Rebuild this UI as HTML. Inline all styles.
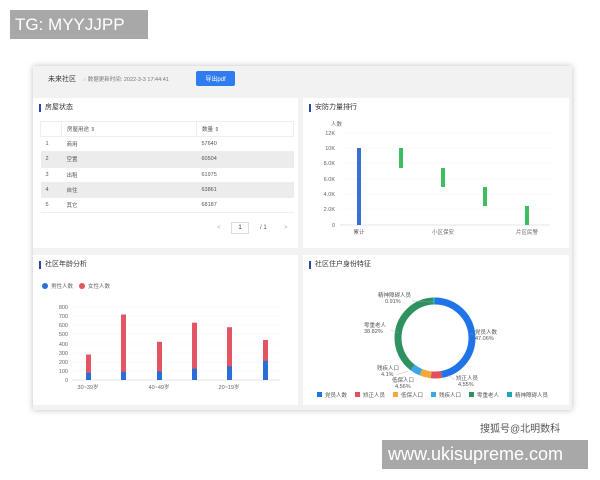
<!DOCTYPE html>
<html><head><meta charset="utf-8"><style>
*{margin:0;padding:0;box-sizing:border-box}
body{width:600px;height:480px;background:#fff;position:relative;overflow:hidden;font-family:"Liberation Sans","Noto Sans CJK SC",sans-serif;color:#333}
.abs{position:absolute}
.tg{left:10px;top:10px;width:138px;height:29px;background:#a8a8a8;color:#fff;font-size:17px;line-height:29px;padding-left:5px}
.wm{left:382px;top:440px;width:206px;height:29px;background:#a8a8a8;color:#fff;font-size:18px;line-height:29px;padding-left:6px}
.dash{left:33px;top:66px;width:539px;height:344px;background:#f2f2f2;box-shadow:0 0 6px rgba(0,0,0,.25)}
.panel{background:#fff;position:absolute}
.ttl{position:absolute;left:6px;top:6px;font-size:7px;color:#333;border-left:2px solid #2a47a6;padding-left:4px;line-height:8px}
.t7{font-size:6px;color:#555}
table{border-collapse:collapse;position:absolute;left:7px;top:23px;width:254px;font-size:5.5px;color:#555}
td{height:15.2px;border-bottom:1px solid #eee;padding-left:5px}
tr.g td{background:#ececec}
.btn{left:163px;top:5px;width:39px;height:15px;background:#2f7cf0;border-radius:2px;color:#fff;font-size:6px;display:flex;align-items:center;justify-content:center}
</style></head><body>
<div class="abs tg">TG: MYYJJPP</div>
<div class="abs dash">
 <div class="abs" style="left:15px;top:8px;font-size:7px;color:#333">未来社区</div>
 <div class="abs t7" style="left:50px;top:9px;font-size:5.5px;color:#777">◌ 数据更新时间: 2022-3-3 17:44:41</div>
 <div class="abs btn">导出pdf</div>

 <div class="panel" style="left:0;top:32px;width:265px;height:150px">
  <div class="ttl">房屋状态</div>
  <table>
   <tr><td style="width:21px;border:1px solid #eee"></td><td style="width:135px;border:1px solid #eee">房屋用途 ⇕</td><td style="border:1px solid #eee">数量 ⇕</td></tr>
   <tr><td>1</td><td>商用</td><td>57640</td></tr>
   <tr class="g"><td>2</td><td>空置</td><td>60504</td></tr>
   <tr><td>3</td><td>出租</td><td>61975</td></tr>
   <tr class="g"><td>4</td><td>自住</td><td>63861</td></tr>
   <tr><td>5</td><td>其它</td><td>68187</td></tr>
  </table>
  <div class="abs t7" style="left:184px;top:127px;color:#aaa">&lt;</div>
  <div class="abs" style="left:198px;top:124px;width:18px;height:12px;border:1px solid #ddd;font-size:6px;text-align:center;line-height:10px">1</div>
  <div class="abs t7" style="left:227px;top:127px">/ 1</div>
  <div class="abs t7" style="left:251px;top:127px;color:#aaa">&gt;</div>
 </div>

 <div class="panel" style="left:270px;top:32px;width:266px;height:150px">
  <div class="ttl">安防力量排行</div>
 </div>
 <div class="panel" style="left:0;top:189px;width:265px;height:150px">
  <div class="ttl">社区年龄分析</div>
 </div>
 <div class="panel" style="left:270px;top:189px;width:266px;height:150px">
  <div class="ttl">社区住户身份特征</div>
 </div>
</div>

<svg class="abs" style="left:0;top:0" width="600" height="480" font-family="Liberation Sans,Noto Sans CJK SC,sans-serif" font-size="5.5" fill="#666">
 <text x="331" y="126">人数</text>
 <g stroke="#eee" stroke-dasharray="2,2" stroke-width="0.6">
  <line x1="340" y1="133" x2="550" y2="133"/><line x1="340" y1="148" x2="550" y2="148"/><line x1="340" y1="163" x2="550" y2="163"/><line x1="340" y1="179" x2="550" y2="179"/><line x1="340" y1="194" x2="550" y2="194"/><line x1="340" y1="209" x2="550" y2="209"/>
 </g>
 <line x1="340" y1="225" x2="550" y2="225" stroke="#ccc" stroke-width="0.6"/>
 <g text-anchor="end"><text x="335" y="135">12K</text><text x="335" y="150">10K</text><text x="335" y="165">8.0K</text><text x="335" y="181">6.0K</text><text x="335" y="196">4.0K</text><text x="335" y="211">2.0K</text><text x="335" y="227">0</text></g>
 <rect x="357" y="148" width="4" height="77" fill="#3a6fd0"/>
 <g fill="#3cbf62"><rect x="399" y="148" width="4" height="20"/><rect x="441" y="168" width="4" height="19"/><rect x="483" y="187" width="4" height="19"/><rect x="525" y="206" width="4" height="19"/></g>
 <g text-anchor="middle"><text x="359" y="234">累计</text><text x="443" y="234">小区保安</text><text x="527" y="234">片区民警</text></g>

 <circle cx="45" cy="286" r="3" fill="#2a6fd6"/><text x="51" y="288">男性人数</text>
 <circle cx="82" cy="286" r="3" fill="#e25563"/><text x="88" y="288">女性人数</text>
 <g stroke="#eee" stroke-dasharray="2,2" stroke-width="0.6">
  <line x1="72" y1="307" x2="280" y2="307"/><line x1="72" y1="316" x2="280" y2="316"/><line x1="72" y1="325" x2="280" y2="325"/><line x1="72" y1="334" x2="280" y2="334"/><line x1="72" y1="344" x2="280" y2="344"/><line x1="72" y1="353" x2="280" y2="353"/><line x1="72" y1="362" x2="280" y2="362"/><line x1="72" y1="371" x2="280" y2="371"/>
 </g>
 <line x1="72" y1="380" x2="280" y2="380" stroke="#ccc" stroke-width="0.6"/>
 <g text-anchor="end"><text x="68" y="309">800</text><text x="68" y="318">700</text><text x="68" y="327">600</text><text x="68" y="336">500</text><text x="68" y="346">400</text><text x="68" y="355">300</text><text x="68" y="364">200</text><text x="68" y="373">100</text><text x="68" y="382">0</text></g>
 <g fill="#e25563"><rect x="86" y="354.5" width="5" height="25.5"/><rect x="121" y="314.5" width="5" height="65.5"/><rect x="157" y="341.8" width="5" height="38.2"/><rect x="192" y="322.7" width="5" height="57.3"/><rect x="227" y="327.2" width="5" height="52.8"/><rect x="263" y="340" width="5" height="40"/></g>
 <g fill="#2a6fd6"><rect x="86" y="372.7" width="5" height="7.3"/><rect x="121" y="371.8" width="5" height="8.2"/><rect x="157" y="371.4" width="5" height="8.6"/><rect x="192" y="368.6" width="5" height="11.4"/><rect x="227" y="366.3" width="5" height="13.7"/><rect x="263" y="360.9" width="5" height="19.1"/></g>
 <g text-anchor="middle"><text x="88" y="389">30~39岁</text><text x="159" y="389">40~49岁</text><text x="229" y="389">20~19岁</text></g>

 <g transform="rotate(-90 435 338)" fill="none" stroke-width="7">
  <circle cx="435" cy="338" r="37" stroke="#1f74e8" stroke-dasharray="109.4 300" stroke-dashoffset="0"/>
  <circle cx="435" cy="338" r="37" stroke="#e2505d" stroke-dasharray="10.58 300" stroke-dashoffset="-109.4"/>
  <circle cx="435" cy="338" r="37" stroke="#f2a93b" stroke-dasharray="10.6 300" stroke-dashoffset="-119.98"/>
  <circle cx="435" cy="338" r="37" stroke="#3aa6ec" stroke-dasharray="9.53 300" stroke-dashoffset="-130.58"/>
  <circle cx="435" cy="338" r="37" stroke="#2e9160" stroke-dasharray="90.25 300" stroke-dashoffset="-140.11"/>
  <circle cx="435" cy="338" r="37" stroke="#1fa6b8" stroke-dasharray="2.12 300" stroke-dashoffset="-230.36"/>
 </g>
 <g stroke="#aaa" stroke-width="0.4" fill="none"><polyline points="412,301 430,302 434,301"/><polyline points="391,330 398,333"/><polyline points="396,375 408,371"/><polyline points="395,383 405,376"/><polyline points="470,334 473,334"/><polyline points="455,380 448,375"/></g>
 <g font-size="5.5" fill="#555">
  <text x="378" y="297">精神障碍人员</text><text x="385" y="303">0.91%</text>
  <text x="364" y="327">零重老人</text><text x="364" y="333">38.82%</text>
  <text x="475" y="334">党员人数</text><text x="475" y="340">47.06%</text>
  <text x="377" y="370">残疾人口</text><text x="381" y="376">4.1%</text>
  <text x="392" y="382">低保人口</text><text x="395" y="388">4.56%</text>
  <text x="456" y="380">矫正人员</text><text x="458" y="386">4.55%</text>
 </g>
 <g font-size="5.5" fill="#555">
  <rect x="317" y="392" width="5" height="5" fill="#1f74e8"/><text x="325" y="397">党员人数</text>
  <rect x="355" y="392" width="5" height="5" fill="#e2505d"/><text x="363" y="397">矫正人员</text>
  <rect x="393" y="392" width="5" height="5" fill="#f2a93b"/><text x="401" y="397">低保人口</text>
  <rect x="431" y="392" width="5" height="5" fill="#3aa6ec"/><text x="439" y="397">残疾人口</text>
  <rect x="469" y="392" width="5" height="5" fill="#2e9160"/><text x="477" y="397">零重老人</text>
  <rect x="507" y="392" width="5" height="5" fill="#1fa6b8"/><text x="515" y="397">精神障碍人员</text>
 </g>
 <text x="480" y="432" font-size="10" fill="#555">搜狐号@北明数科</text>
</svg>
<div class="abs wm">www.ukisupreme.com</div>
</body></html>
